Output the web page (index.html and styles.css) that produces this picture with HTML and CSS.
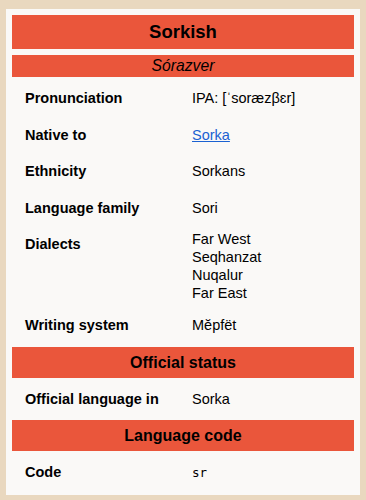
FILE: index.html
```html
<!DOCTYPE html>
<html lang="en">
<head>
<meta charset="utf-8">
<title>Sorkish</title>
<link rel="stylesheet" href="styles.css">
</head>
<body>
<div class="infobox">
  <div class="title">Sorkish</div>
  <div class="native">Sórazver</div>

  <div class="label">Pronunciation</div>
  <div class="value">IPA: [ˈsoræzβɛr]</div>

  <div class="label">Native to</div>
  <div class="value"><a href="#">Sorka</a></div>

  <div class="label">Ethnicity</div>
  <div class="value">Sorkans</div>

  <div class="label">Language family</div>
  <div class="value">Sori</div>

  <div class="label">Dialects</div>
  <div class="value list">
    <div>Far West</div>
    <div>Seqhanzat</div>
    <div>Nuqalur</div>
    <div>Far East</div>
  </div>

  <div class="label">Writing system</div>
  <div class="value">Mĕpfët</div>

  <div class="section">Official status</div>

  <div class="label">Official language in</div>
  <div class="value">Sorka</div>

  <div class="section">Language code</div>

  <div class="label">Code</div>
  <div class="value"><code class="code">sr</code></div>
</div>
</body>
</html>
```

FILE: styles.css
```css
html, body {
  margin: 0;
  padding: 0;
}
body {
  background: #e9d8bf;
  padding: 9px 6px 7px;
  font-family: "Liberation Sans", Arial, sans-serif;
  font-size: 14.5px;
  color: #000;
}
.infobox {
  background: #faf9f7;
  display: grid;
  grid-template-columns: 174px 1fr;
  gap: 6px;
  padding: 6px;
  line-height: 16.5px;
}
.title {
  grid-column: 1 / -1;
  background: #ea563b;
  text-align: center;
  font-weight: bold;
  font-size: 18.5px;
  line-height: 22px;
  padding: 6px;
}
.native {
  grid-column: 1 / -1;
  background: #ea563b;
  text-align: center;
  font-style: italic;
  font-size: 15.7px;
  line-height: 18px;
  padding: 2px;
}
.section {
  grid-column: 1 / -1;
  background: #ea563b;
  text-align: center;
  font-weight: bold;
  font-size: 16px;
  line-height: 19px;
  padding: 6px;
}
.label {
  font-weight: bold;
  padding: 7px 0 7px 13px;
}
.value {
  padding: 7px 0;
}
.value.list {
  padding: 1px 0 2px;
  line-height: 18px;
}
.value a {
  color: #1a62d2;
  text-decoration: underline;
}
.code {
  font-family: "DejaVu Sans Mono", "Liberation Mono", monospace;
  font-size: 12.5px;
}
```
